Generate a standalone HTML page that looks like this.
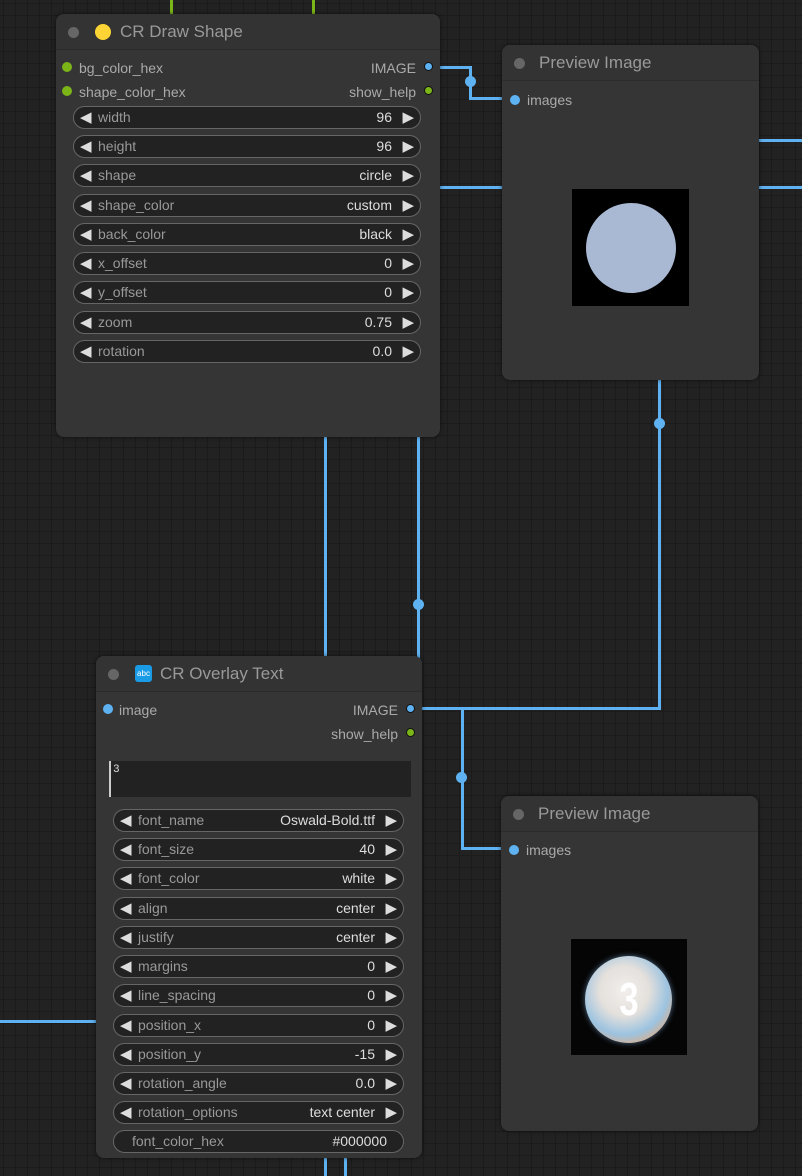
<!DOCTYPE html>
<html><head><style>
*{box-sizing:border-box;margin:0;padding:0}
body{width:802px;height:1176px;overflow:hidden;position:relative;font-family:"Liberation Sans",sans-serif;
background-color:#222;
background-image:linear-gradient(#1b1b1b 1px,transparent 1px),linear-gradient(90deg,#1b1b1b 1px,transparent 1px);
background-size:12px 12px;background-position:3px 3px}
.a{position:absolute}
.w{position:absolute;background:#5fb2f2}
.g{position:absolute;background:#7cb518}
.dot{position:absolute;width:11px;height:11px;border-radius:50%;background:#5fb2f2}
.node{position:absolute;background:#353535;border-radius:8px;box-shadow:0 0 4px rgba(0,0,0,.6)}
.title{position:absolute;left:0;right:0;top:0;height:36px;background:#333;border-radius:8px 8px 0 0;border-bottom:1px solid #2b2b2b;color:#999;font-size:17px;line-height:36px}
.tdot{position:absolute;left:12px;top:13px;width:11px;height:11px;border-radius:50%;background:#666}
.lbl{position:absolute;color:#aaa;font-size:14px;line-height:16px}
.sock{position:absolute;width:9px;height:9px;border-radius:50%;border:1px solid #111}
.wd{position:absolute;height:23px;border:1px solid #666;border-radius:12px;background:#222;font-size:14px;line-height:21px;color:#999}
.wd .l{position:absolute;left:6px;color:#ddd;font-size:15px}
.wd .r{position:absolute;right:6px;color:#ddd;font-size:15px}
.wd .n{position:absolute;left:24px}
.wd .v{position:absolute;right:28px;color:#ddd}
</style></head><body>
<div class="g" style="left:170px;top:0;width:3px;height:16px"></div>
<div class="g" style="left:312px;top:0;width:3px;height:16px"></div>
<div class="w" style="left:428px;top:66px;width:43px;height:3px"></div>
<div class="w" style="left:469px;top:66px;width:3px;height:34px"></div>
<div class="w" style="left:469px;top:97px;width:42px;height:3px"></div>
<div class="dot" style="left:465px;top:76px"></div>
<div class="w" style="left:440px;top:186px;width:64px;height:3px"></div>
<div class="w" style="left:758px;top:186px;width:44px;height:3px"></div>
<div class="w" style="left:758px;top:139px;width:44px;height:3px"></div>
<div class="w" style="left:324px;top:436px;width:3px;height:222px"></div>
<div class="w" style="left:417px;top:436px;width:3px;height:222px"></div>
<div class="dot" style="left:413px;top:599px"></div>
<div class="w" style="left:324px;top:1156px;width:3px;height:20px"></div>
<div class="w" style="left:344px;top:1156px;width:3px;height:20px"></div>
<div class="w" style="left:658px;top:379px;width:3px;height:331px"></div>
<div class="dot" style="left:654px;top:418px"></div>
<div class="w" style="left:420px;top:707px;width:241px;height:3px"></div>
<div class="w" style="left:461px;top:707px;width:3px;height:143px"></div>
<div class="w" style="left:461px;top:847px;width:50px;height:3px"></div>
<div class="dot" style="left:456px;top:772px"></div>
<div class="w" style="left:0;top:1020px;width:97px;height:3px"></div>

<div class="node" style="left:56px;top:14px;width:384px;height:423px">
<div class="title"><div class="tdot"></div><div class="a" style="left:39px;top:10px;width:16px;height:16px;border-radius:50%;background:#fcd535"></div><span class="a" style="left:64px">CR Draw Shape</span></div>
<div class="sock" style="left:6px;top:48px;background:#7cb518;border:0;width:10px;height:10px"></div><div class="lbl" style="left:23px;top:46px">bg_color_hex</div>
<div class="sock" style="left:6px;top:72px;background:#7cb518;border:0;width:10px;height:10px"></div><div class="lbl" style="left:23px;top:70px">shape_color_hex</div>
<div class="lbl" style="right:24px;top:46px">IMAGE</div><div class="sock" style="right:7px;top:48px;background:#5fb2f2"></div>
<div class="lbl" style="right:24px;top:70px">show_help</div><div class="sock" style="right:7px;top:72px;background:#7cb518"></div>
</div>
<div class="wd" style="left:73px;top:106px;width:348px"><span class="l">◀</span><span class="n">width</span><span class="v">96</span><span class="r">▶</span></div>
<div class="wd" style="left:73px;top:135px;width:348px"><span class="l">◀</span><span class="n">height</span><span class="v">96</span><span class="r">▶</span></div>
<div class="wd" style="left:73px;top:164px;width:348px"><span class="l">◀</span><span class="n">shape</span><span class="v">circle</span><span class="r">▶</span></div>
<div class="wd" style="left:73px;top:194px;width:348px"><span class="l">◀</span><span class="n">shape_color</span><span class="v">custom</span><span class="r">▶</span></div>
<div class="wd" style="left:73px;top:223px;width:348px"><span class="l">◀</span><span class="n">back_color</span><span class="v">black</span><span class="r">▶</span></div>
<div class="wd" style="left:73px;top:252px;width:348px"><span class="l">◀</span><span class="n">x_offset</span><span class="v">0</span><span class="r">▶</span></div>
<div class="wd" style="left:73px;top:281px;width:348px"><span class="l">◀</span><span class="n">y_offset</span><span class="v">0</span><span class="r">▶</span></div>
<div class="wd" style="left:73px;top:311px;width:348px"><span class="l">◀</span><span class="n">zoom</span><span class="v">0.75</span><span class="r">▶</span></div>
<div class="wd" style="left:73px;top:340px;width:348px"><span class="l">◀</span><span class="n">rotation</span><span class="v">0.0</span><span class="r">▶</span></div>

<div class="node" style="left:502px;top:45px;width:257px;height:335px">
<div class="title"><div class="tdot"></div><span class="a" style="left:37px">Preview Image</span></div>
<div class="sock" style="left:8px;top:50px;background:#5fb2f2;border:0;width:10px;height:10px"></div><div class="lbl" style="left:25px;top:47px">images</div>
<div class="a" style="left:70px;top:144px;width:117px;height:117px;background:#000"><div class="a" style="left:14px;top:14px;width:90px;height:90px;border-radius:50%;background:#a9b9d4"></div></div>
</div>

<div class="node" style="left:96px;top:656px;width:326px;height:502px">
<div class="title"><div class="tdot"></div><div class="a" style="left:39px;top:9px;width:17px;height:17px;border-radius:3px;background:#1a9be6;color:#fff;font-size:8px;line-height:17px;text-align:center">abc</div><span class="a" style="left:64px">CR Overlay Text</span></div>
<div class="sock" style="left:7px;top:48px;background:#5fb2f2;border:0;width:10px;height:10px"></div><div class="lbl" style="left:23px;top:46px">image</div>
<div class="lbl" style="right:24px;top:46px">IMAGE</div><div class="sock" style="right:7px;top:48px;background:#5fb2f2"></div>
<div class="lbl" style="right:24px;top:70px">show_help</div><div class="sock" style="right:7px;top:72px;background:#7cb518"></div>
<div class="a" style="left:13px;top:105px;width:302px;height:36px;background:#222;border-left:2px solid #ccc;color:#ddd;font-family:'Liberation Mono',monospace;font-size:11px;padding:3px 2px">3</div>
</div>
<div class="wd" style="left:113px;top:809px;width:291px"><span class="l">◀</span><span class="n">font_name</span><span class="v">Oswald-Bold.ttf</span><span class="r">▶</span></div>
<div class="wd" style="left:113px;top:838px;width:291px"><span class="l">◀</span><span class="n">font_size</span><span class="v">40</span><span class="r">▶</span></div>
<div class="wd" style="left:113px;top:867px;width:291px"><span class="l">◀</span><span class="n">font_color</span><span class="v">white</span><span class="r">▶</span></div>
<div class="wd" style="left:113px;top:897px;width:291px"><span class="l">◀</span><span class="n">align</span><span class="v">center</span><span class="r">▶</span></div>
<div class="wd" style="left:113px;top:926px;width:291px"><span class="l">◀</span><span class="n">justify</span><span class="v">center</span><span class="r">▶</span></div>
<div class="wd" style="left:113px;top:955px;width:291px"><span class="l">◀</span><span class="n">margins</span><span class="v">0</span><span class="r">▶</span></div>
<div class="wd" style="left:113px;top:984px;width:291px"><span class="l">◀</span><span class="n">line_spacing</span><span class="v">0</span><span class="r">▶</span></div>
<div class="wd" style="left:113px;top:1014px;width:291px"><span class="l">◀</span><span class="n">position_x</span><span class="v">0</span><span class="r">▶</span></div>
<div class="wd" style="left:113px;top:1043px;width:291px"><span class="l">◀</span><span class="n">position_y</span><span class="v">-15</span><span class="r">▶</span></div>
<div class="wd" style="left:113px;top:1072px;width:291px"><span class="l">◀</span><span class="n">rotation_angle</span><span class="v">0.0</span><span class="r">▶</span></div>
<div class="wd" style="left:113px;top:1101px;width:291px"><span class="l">◀</span><span class="n">rotation_options</span><span class="v">text center</span><span class="r">▶</span></div>
<div class="wd" style="left:113px;top:1130px;width:291px"><span class="n" style="left:18px">font_color_hex</span><span class="v" style="right:16px">#000000</span></div>

<div class="node" style="left:501px;top:796px;width:257px;height:335px">
<div class="title"><div class="tdot"></div><span class="a" style="left:37px">Preview Image</span></div>
<div class="sock" style="left:8px;top:49px;background:#5fb2f2;border:0;width:10px;height:10px"></div><div class="lbl" style="left:25px;top:46px">images</div>
<div class="a" style="left:70px;top:143px;width:116px;height:116px;background:#050505">
<div class="a" style="left:14px;top:17px;width:87px;height:87px;border-radius:50%;background:radial-gradient(circle at 45% 40%,#f2efec 0%,#e4e0dc 35%,#9cc3e0 62%,#d9ae8c 80%,#7c9ab4 100%);box-shadow:0 0 6px rgba(150,200,255,.5)"></div>
<div class="a" style="left:0;top:30px;width:116px;text-align:center;color:#fff;font-weight:bold;font-size:46px;line-height:60px;transform:scaleX(.75)">3</div>
</div>
</div>
</body></html>
